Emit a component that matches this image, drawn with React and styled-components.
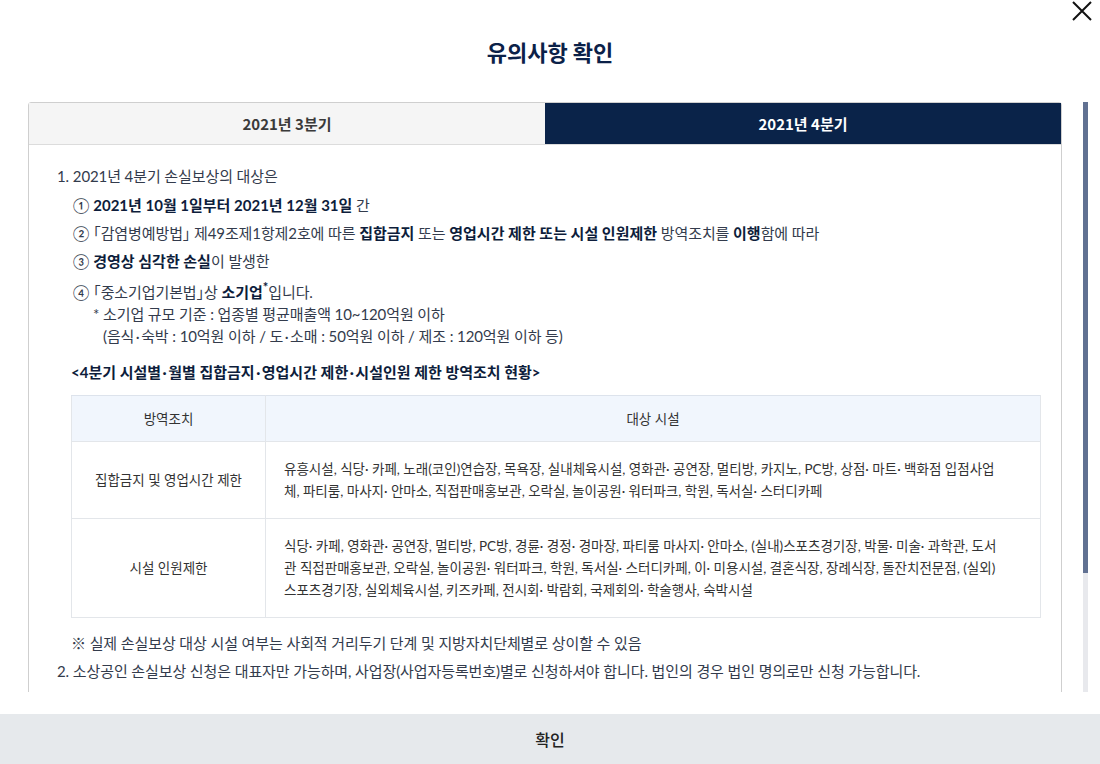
import React from 'react'
import styled, { createGlobalStyle } from 'styled-components'

const GlobalStyle = createGlobalStyle`
  html, body {
    margin: 0;
    padding: 0;
    background: #fff;
  }
  body {
    font-family: Lato, "Noto Sans CJK KR", sans-serif;
    color: #333b4c;
  }
  * { box-sizing: border-box; }
`

const Modal = styled.div`
  position: relative;
  width: 1100px;
  height: 764px;
  display: flex;
  flex-direction: column;
  overflow: hidden;
`

const CloseButton = styled.button`
  position: absolute;
  top: 0;
  right: 6px;
  width: 24px;
  height: 24px;
  padding: 0;
  border: 0;
  background: none;
  cursor: pointer;
`

const Header = styled.div`
  height: 102px;
  padding-top: 35px;
  text-align: center;
`

const Title = styled.h2`
  margin: 0;
  font-family: "Noto Sans CJK KR", sans-serif;
  font-size: 22px;
  line-height: 32px;
  font-weight: 700;
  color: #0b2148;
`

const ContentRow = styled.div`
  display: flex;
  height: 590px;
  padding-left: 28px;
  gap: 21px;
`

const ScrollArea = styled.div`
  flex: 0 0 1034px;
  height: 100%;
  overflow-y: scroll;
  scrollbar-width: none;

  &::-webkit-scrollbar {
    display: none;
  }
`

const Track = styled.div`
  flex: 0 0 5px;
  height: 100%;
  background: #e8e9ed;
`

const Thumb = styled.div`
  height: 471px;
  background: #617192;
`

const Box = styled.div`
  border: 1px solid #cfcfcf;
  border-radius: 3px 3px 0 0;
`

const Tabs = styled.div`
  display: flex;
  border-bottom: 1px solid #dcdcdc;
`

const Tab = styled.div`
  flex: 1;
  height: 41px;
  display: flex;
  align-items: center;
  justify-content: center;
  font-family: "Noto Sans CJK KR", sans-serif;
  font-size: 15px;
  font-weight: 700;
  background: ${p => (p.$active ? '#0a2349' : '#f5f5f5')};
  color: ${p => (p.$active ? '#fff' : '#3a3a3a')};
`

const Body = styled.div`
  padding: 17px 20px 97px 28px;
  font-size: 15px;
  line-height: 28px;
  letter-spacing: -0.1px;
`

const Item = styled.div``

const SubList = styled.div`
  padding-left: 16px;
  margin-top: 1px;
`

const SubItem = styled.div`
  margin-top: ${p => p.$gap || 0}px;
  line-height: ${p => p.$lh || 28}px;
`

const Note = styled.div`
  padding-left: ${p => p.$indent}px;
  line-height: 22px;
`

const B = styled.b`
  font-weight: 700;
  color: #0d1d3b;
  letter-spacing: 0;
`

const Sup = styled.sup`
  font-weight: 700;
  color: #0d1d3b;
  font-size: 13px;
  line-height: 0;
`

/* half-width corner brackets */
const Bracket = styled.span`
  font-family: "Noto Sans CJK KR", sans-serif;
  font-feature-settings: "halt" 1;
`

const Mid = styled.span`
  padding: 0 1.5px;
`

const Section = styled.div`
  padding-left: 14px;
`

const TableTitle = styled.div`
  margin-top: 11px;
  font-weight: 700;
  color: #0d1d3b;
  letter-spacing: 0;
`

const Table = styled.table`
  width: 100%;
  margin-top: 9px;
  border-collapse: collapse;
  font-size: 13.5px;
  line-height: 22px;
  letter-spacing: 0;
  color: #333;
`

const Th = styled.th`
  padding: 12px 10px 11px;
  background: #f1f6fd;
  font-weight: 400;
  text-align: center;
  border: 1px solid #e3e6ea;
  border-top-color: #dde3ec;
  width: ${p => p.$w || 'auto'};
`

const Td = styled.td`
  padding: 16px 18px;
  text-align: ${p => (p.$center ? 'center' : 'left')};
  border: 1px solid #e3e6ea;
  word-break: break-all;
`

const Remark = styled.div`
  margin-top: 11px;
`

const Footer = styled.button`
  margin-top: 22px;
  height: 50px;
  width: 100%;
  border: 0;
  background: #e6e9ec;
  font-family: "Noto Sans CJK KR", sans-serif;
  font-size: 16px;
  font-weight: 500;
  color: #222;
  cursor: pointer;
`

const rows = [
  {
    label: '집합금지 및 영업시간 제한',
    lines: [
      '유흥시설, 식당· 카페, 노래(코인)연습장, 목욕장, 실내체육시설, 영화관· 공연장, 멀티방, 카지노, PC방, 상점· 마트· 백화점 입점사업',
      '체, 파티룸, 마사지· 안마소, 직접판매홍보관, 오락실, 놀이공원· 워터파크, 학원, 독서실· 스터디카페',
    ],
  },
  {
    label: '시설 인원제한',
    lines: [
      '식당· 카페, 영화관· 공연장, 멀티방, PC방, 경륜· 경정· 경마장, 파티룸 마사지· 안마소, (실내)스포츠경기장, 박물· 미술· 과학관, 도서',
      '관 직접판매홍보관, 오락실, 놀이공원· 워터파크, 학원, 독서실· 스터디카페, 이· 미용시설, 결혼식장, 장례식장, 돌잔치전문점, (실외)',
      '스포츠경기장, 실외체육시설, 키즈카페, 전시회· 박람회, 국제회의· 학술행사, 숙박시설',
    ],
  },
]

const Law = ({ children }) => (
  <>
    <Bracket>「</Bracket>
    {children}
    <Bracket>」</Bracket>
  </>
)

const Dot = () => <Mid>·</Mid>

export default function App() {
  return (
    <Modal>
      <GlobalStyle />
      <CloseButton aria-label="닫기">
        <svg width="24" height="24" viewBox="0 0 24 24">
          <path d="M3 2 L21 20 M21 2 L3 20" stroke="#111" strokeWidth="2" fill="none" />
        </svg>
      </CloseButton>

      <Header>
        <Title>유의사항 확인</Title>
      </Header>

      <ContentRow>
        <ScrollArea>
          <Box>
            <Tabs>
              <Tab>2021년 3분기</Tab>
              <Tab $active>2021년 4분기</Tab>
            </Tabs>

            <Body>
              <Item>1. 2021년 4분기 손실보상의 대상은</Item>
              <SubList>
                <SubItem>① <B>2021년 10월 1일부터 2021년 12월 31일</B> 간</SubItem>
                <SubItem>
                  ② <Law>감염병예방법</Law> 제49조제1항제2호에 따른 <B>집합금지</B> 또는 <B>영업시간 제한 또는 시설 인원제한</B> 방역조치를 <B>이행</B>함에 따라
                </SubItem>
                <SubItem>③ <B>경영상 심각한 손실</B>이 발생한</SubItem>
                <SubItem $gap={6} $lh={22}>
                  ④ <Law>중소기업기본법</Law>상 <B>소기업</B><Sup>*</Sup>입니다.
                </SubItem>
                <Note $indent={20}>* 소기업 규모 기준 : 업종별 평균매출액 10~120억원 이하</Note>
                <Note $indent={30}>(음식<Dot />숙박 : 10억원 이하 / 도<Dot />소매 : 50억원 이하 / 제조 : 120억원 이하 등)</Note>
              </SubList>

              <Section>
                <TableTitle>
                  &lt;4분기 시설별<Dot />월별 집합금지<Dot />영업시간 제한<Dot />시설인원 제한 방역조치 현황&gt;
                </TableTitle>
                <Table>
                  <thead>
                    <tr>
                      <Th $w="194px">방역조치</Th>
                      <Th>대상 시설</Th>
                    </tr>
                  </thead>
                  <tbody>
                    {rows.map(r => (
                      <tr key={r.label}>
                        <Td $center>{r.label}</Td>
                        <Td>
                          {r.lines.map((l, i) => (
                            <React.Fragment key={i}>
                              {l}
                              {i < r.lines.length - 1 && <br />}
                            </React.Fragment>
                          ))}
                        </Td>
                      </tr>
                    ))}
                  </tbody>
                </Table>
                <Remark>※ 실제 손실보상 대상 시설 여부는 사회적 거리두기 단계 및 지방자치단체별로 상이할 수 있음</Remark>
              </Section>

              <Item>2. 소상공인 손실보상 신청은 대표자만 가능하며, 사업장(사업자등록번호)별로 신청하셔야 합니다. 법인의 경우 법인 명의로만 신청 가능합니다.</Item>
              <Item>3. 손실보상금 신청 시 입력하신 정보는 손실보상금 산정 및 지급을 위해서만 활용되며, 허위 정보 입력 시 지급이 취소될 수 있습니다.</Item>
              <Item>4. 손실보상금은 신청하신 대표자 명의의 계좌로만 지급됩니다.</Item>
            </Body>
          </Box>
        </ScrollArea>
        <Track>
          <Thumb />
        </Track>
      </ContentRow>

      <Footer>확인</Footer>
    </Modal>
  )
}
